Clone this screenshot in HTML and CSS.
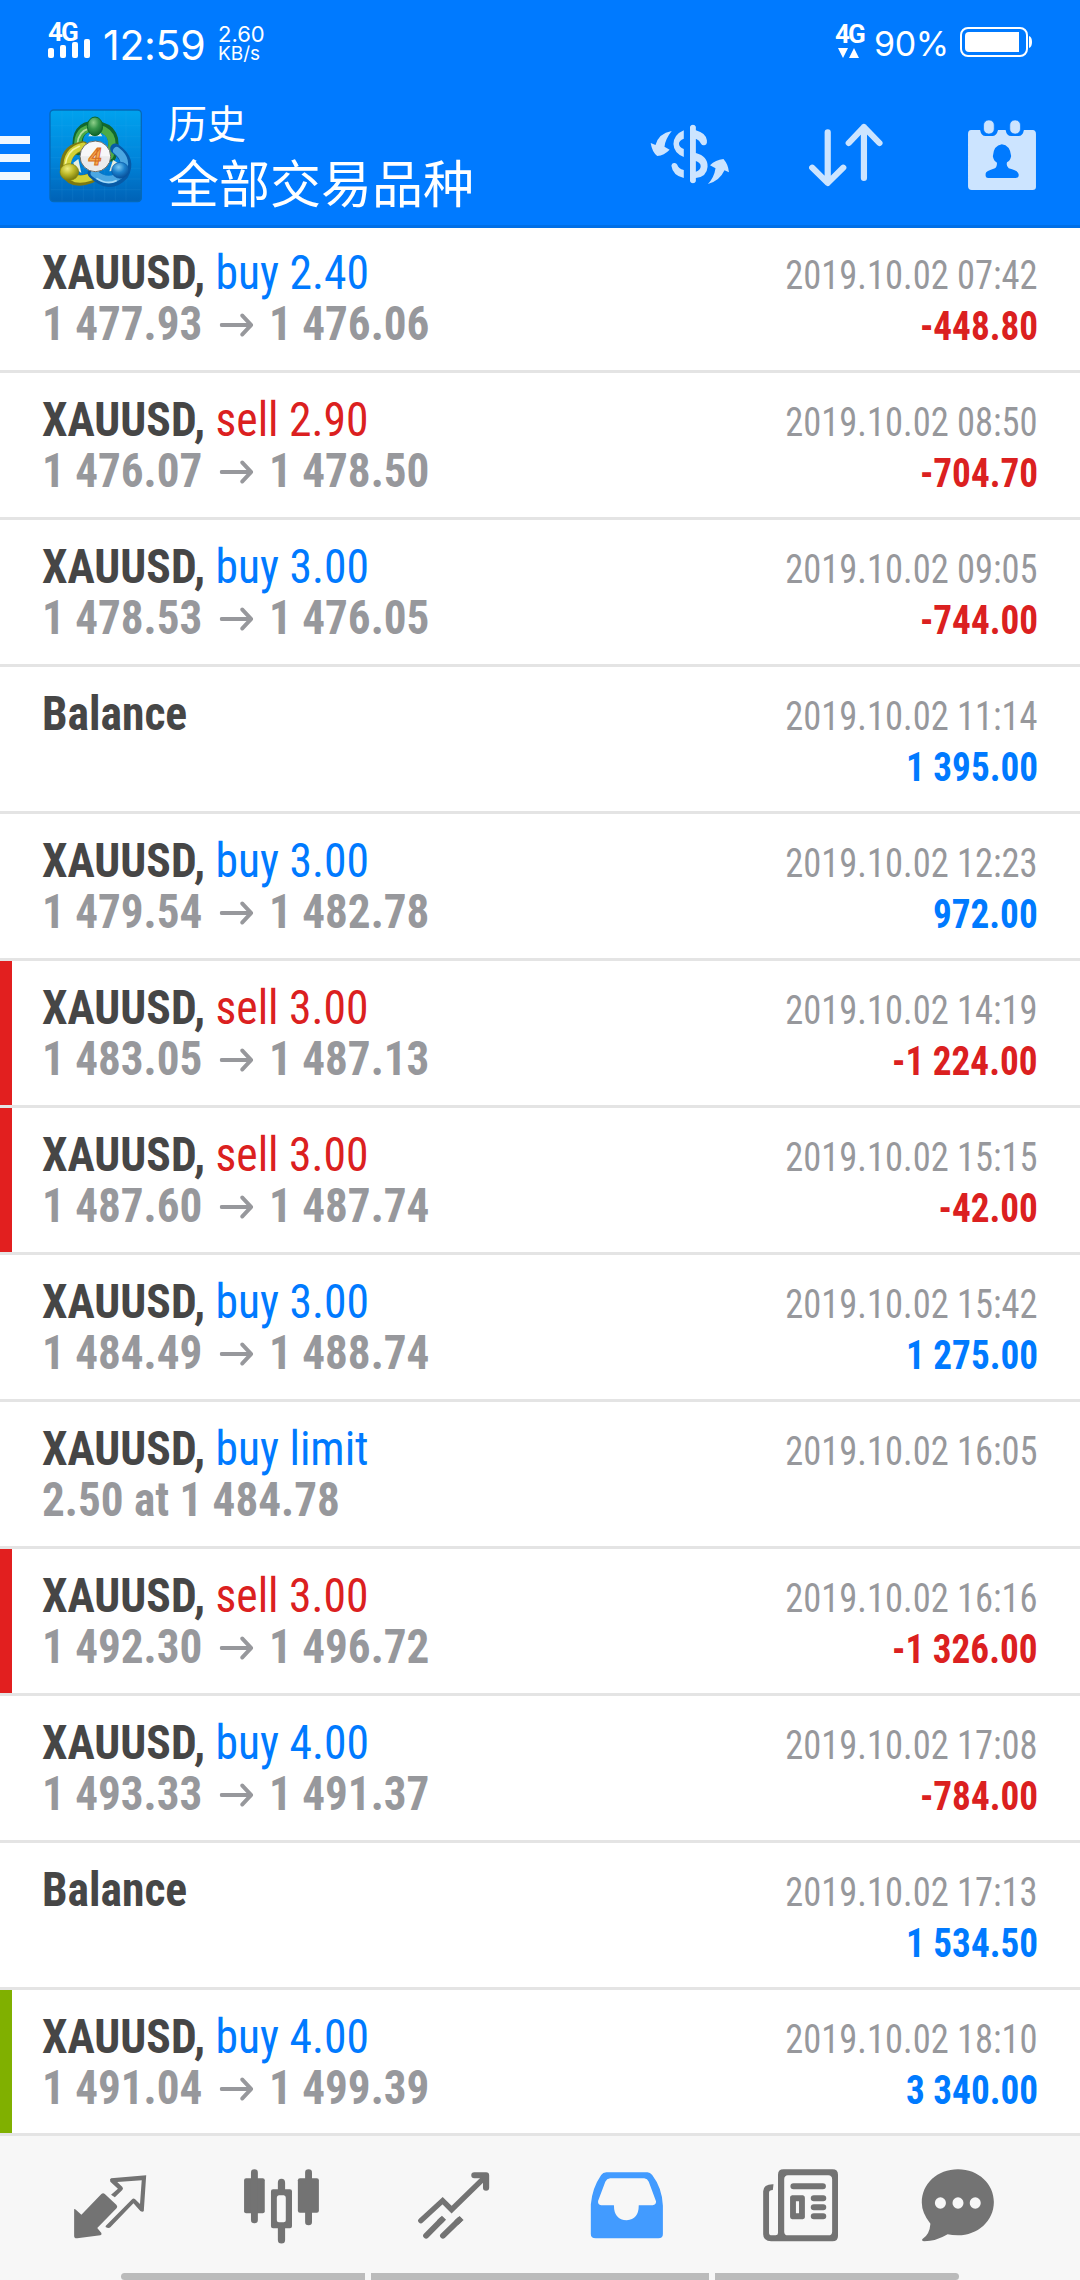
FILE: index.html
```html
<!DOCTYPE html>
<html lang="zh-CN">
<head>
<meta charset="utf-8">
<title>历史</title>
<link rel="stylesheet" href="styles.css">
</head>
<body>
<svg class="defs" width="0" height="0" aria-hidden="true">
  <symbol id="arrow" viewBox="0 0 36 24">
    <path d="M2 12H33M24 2.500L33.500 12L24 21.500" fill="none" stroke="currentColor" stroke-width="4" stroke-linecap="round" stroke-linejoin="round"/>
  </symbol>
</svg>
<div class="screen">
  <header class="header">
    <div class="status">
      <div class="signal">
        <span class="net">4G</span>
        <span class="bars"><i class="b1"></i><i class="b2"></i><i class="b3"></i><i class="b4"></i></span>
      </div>
      <span class="clock">12:59</span>
      <div class="speed"><span>2.60</span><span class="unit">KB/s</span></div>
      <div class="data">
        <span class="net-small">4G</span>
        <svg width="22" height="10" viewBox="0 0 22 10"><path d="M0 0H10L5 10ZM11 10H21L16 0Z" fill="#fff"/></svg>
      </div>
      <span class="percent">90%</span>
      <svg class="battery" width="73" height="30" viewBox="0 0 73 30">
        <rect x="1" y="1" width="66" height="28" rx="7" fill="none" stroke="#fff" stroke-width="2"/>
        <path d="M9 5H59V25H9Q5 25 5 21V9Q5 5 9 5Z" fill="#fff"/>
        <path d="M69 9Q72 10 72 15T69 21Z" fill="#fff"/>
      </svg>
    </div>
    <div class="toolbar">
      <div class="menu"><i></i><i></i><i></i></div>
      <svg class="logo" width="94" height="94" viewBox="0 0 282 282">
        <defs>
          <linearGradient id="bg" x1="0" y1="0" x2="0" y2="1"><stop offset="0" stop-color="#00a2ee"/><stop offset=".55" stop-color="#0084da"/><stop offset="1" stop-color="#0062b6"/></linearGradient>
          <radialGradient id="gr" cx=".4" cy=".3" r=".7"><stop offset="0" stop-color="#8fd08a"/><stop offset=".5" stop-color="#35954a"/><stop offset="1" stop-color="#11632a"/></radialGradient>
          <radialGradient id="ye" cx=".4" cy=".3" r=".7"><stop offset="0" stop-color="#f0ee80"/><stop offset=".5" stop-color="#bdb92a"/><stop offset="1" stop-color="#77780d"/></radialGradient>
          <radialGradient id="bl" cx=".4" cy=".3" r=".7"><stop offset="0" stop-color="#80ccf4"/><stop offset=".5" stop-color="#1c81cc"/><stop offset="1" stop-color="#08509a"/></radialGradient>
        </defs>
        <rect x="3" y="3" width="274" height="275" rx="11" fill="url(#bg)" stroke="#0569b8" stroke-width="4"/>
        <path d="M39 5V275M71 5V275M103 5V275M135 5V275M167 5V275M199 5V275M231 5V275M5 50H275M5 82H275M5 114H275M5 146H275M5 178H275M5 210H275M5 242H275" stroke="#4bb8ef" stroke-opacity=".16" stroke-width="2"/>
        <g stroke-linecap="round" fill="none">
          <path d="M87 123Q78 51 138 51Q213 60 186 142" stroke="#12672f" stroke-width="31"/>
          <path d="M87 119Q81 56 138 56Q206 65 183 139" stroke="#4cab48" stroke-width="22"/>
          <path d="M85 105Q88 67 121 58" stroke="#b2dda0" stroke-width="5"/>
          <path d="M102 112Q43 122 49 188Q70 229 126 207" stroke="#7d7910" stroke-width="31"/>
          <path d="M102 112Q50 124 54 185Q72 222 123 205" stroke="#d3d136" stroke-width="22"/>
          <path d="M91 112Q54 126 49 167" stroke="#f5f29a" stroke-width="5"/>
          <path d="M199 119Q247 153 223 197Q182 242 131 192" stroke="#075aa6" stroke-width="31"/>
          <path d="M203 125Q240 154 218 194Q181 230 136 193" stroke="#4ba7e2" stroke-width="22"/>
          <path d="M144 209Q174 228 201 215" stroke="#a6daf7" stroke-width="5"/>
        </g>
        <path d="M118 82H160L149 64H129ZM88 150L97 192L77 177L73 161ZM192 153L181 187L197 185L211 164Z" fill="#e5eedf"/>
        <ellipse cx="138" cy="52" rx="23" ry="28" fill="url(#gr)" stroke="#0c682c" stroke-width="3"/>
        <ellipse cx="61" cy="189" rx="28" ry="25" fill="url(#ye)" stroke="#85830e" stroke-width="2"/>
        <ellipse cx="214" cy="184" rx="26" ry="24" fill="url(#bl)" stroke="#0758a6" stroke-width="2"/>
        <circle cx="139" cy="142" r="46" fill="#f7f7f9" stroke="#696a64" stroke-width="3"/>
        <path d="M96 142A43 43 0 0 0 182 142Z" fill="#dededf" opacity=".5"/>
        <text class="logo-mark" x="138" y="167" text-anchor="middle">4</text>
      </svg>
      <div class="titles"><span class="title">历史</span><span class="subtitle">全部交易品种</span></div>
      <svg class="act act-currency" width="80" height="66" viewBox="320 363 232 198" preserveAspectRatio="none">
        <g fill="#cce4ff">
          <path d="M383 393Q364 418 362 440L377 449Q361 466 341 468Q326 456 322 429L336 435Q345 400 383 393Z"/>
          <path d="M488 552Q506 533 510 505L494 496Q510 479 533 477Q547 493 549 517L536 511Q522 543 488 552Z"/>
          <path d="M418 391V416Q404 422 404 431Q404 441 418 447V471Q389 459 388 432Q389 404 418 391Z"/>
          <path d="M382 497A9 9 0 0 1 399 494Q402 505 418 510V534Q386 526 382 497Z"/>
          <path fill-rule="evenodd" d="M436 380A9 9 0 0 1 453 380V391Q482 399 485 421V428A9 9 0 0 1 468 431Q464 420 453 416V459Q488 469 487 500Q485 530 453 534V544A9 9 0 0 1 436 544ZM453 483V515Q467 511 467 499Q467 488 453 483Z"/>
        </g>
      </svg>
      <svg class="act act-sort" width="80" height="66" viewBox="773 367 232 198" preserveAspectRatio="none">
        <path d="M836 398V549M791 504L836 550L881 504M941 535V382M897 430L941 382L986 430" fill="none" stroke="#cce4ff" stroke-width="18" stroke-linecap="round" stroke-linejoin="round"/>
      </svg>
      <svg class="act act-calendar" width="70" height="74" viewBox="1240 354 203 222" preserveAspectRatio="none">
        <path fill="#cce4ff" fill-rule="evenodd" d="M1252 390H1278Q1281 408 1294 408H1313Q1326 408 1330 390H1352Q1355 408 1368 408H1389Q1402 408 1405 390H1431Q1440 391 1440 402V561Q1440 570 1430 570H1254Q1243 570 1243 559V401Q1243 391 1252 390ZM1341 433Q1317 436 1315 469Q1317 483 1327 488Q1327 501 1321 505Q1294 514 1294 521V528Q1295 534 1301 534H1382Q1390 533 1390 525Q1391 512 1361 505Q1353 498 1356 487Q1366 482 1368 468Q1365 436 1341 433Z"/>
        <rect x="1288" y="360" width="31" height="42" rx="15" fill="#cce4ff" stroke="#007aff" stroke-width="2"/><rect x="1364" y="360" width="31" height="42" rx="15" fill="#cce4ff" stroke="#007aff" stroke-width="2"/>
      </svg>
    </div>
  </header>

  <main class="list">
    <article class="row"><div class="line"><span class="sym"><b>XAUUSD,</b> <span class="buy">buy 2.40</span></span><time>2019.10.02 07:42</time></div><div class="line"><span class="price">1 477.93<svg class="arrow"><use href="#arrow"/></svg>1 476.06</span><span class="sum loss">-448.80</span></div></article>
    <article class="row"><div class="line"><span class="sym"><b>XAUUSD,</b> <span class="sell">sell 2.90</span></span><time>2019.10.02 08:50</time></div><div class="line"><span class="price">1 476.07<svg class="arrow"><use href="#arrow"/></svg>1 478.50</span><span class="sum loss">-704.70</span></div></article>
    <article class="row"><div class="line"><span class="sym"><b>XAUUSD,</b> <span class="buy">buy 3.00</span></span><time>2019.10.02 09:05</time></div><div class="line"><span class="price">1 478.53<svg class="arrow"><use href="#arrow"/></svg>1 476.05</span><span class="sum loss">-744.00</span></div></article>
    <article class="row"><div class="line"><span class="sym"><b>Balance</b></span><time>2019.10.02 11:14</time></div><div class="line"><span class="sum gain">1 395.00</span></div></article>
    <article class="row"><div class="line"><span class="sym"><b>XAUUSD,</b> <span class="buy">buy 3.00</span></span><time>2019.10.02 12:23</time></div><div class="line"><span class="price">1 479.54<svg class="arrow"><use href="#arrow"/></svg>1 482.78</span><span class="sum gain">972.00</span></div></article>
    <article class="row stop"><div class="line"><span class="sym"><b>XAUUSD,</b> <span class="sell">sell 3.00</span></span><time>2019.10.02 14:19</time></div><div class="line"><span class="price">1 483.05<svg class="arrow"><use href="#arrow"/></svg>1 487.13</span><span class="sum loss">-1 224.00</span></div></article>
    <article class="row stop"><div class="line"><span class="sym"><b>XAUUSD,</b> <span class="sell">sell 3.00</span></span><time>2019.10.02 15:15</time></div><div class="line"><span class="price">1 487.60<svg class="arrow"><use href="#arrow"/></svg>1 487.74</span><span class="sum loss">-42.00</span></div></article>
    <article class="row"><div class="line"><span class="sym"><b>XAUUSD,</b> <span class="buy">buy 3.00</span></span><time>2019.10.02 15:42</time></div><div class="line"><span class="price">1 484.49<svg class="arrow"><use href="#arrow"/></svg>1 488.74</span><span class="sum gain">1 275.00</span></div></article>
    <article class="row"><div class="line"><span class="sym"><b>XAUUSD,</b> <span class="buy">buy limit</span></span><time>2019.10.02 16:05</time></div><div class="line"><span class="price">2.50 at 1 484.78</span></div></article>
    <article class="row stop"><div class="line"><span class="sym"><b>XAUUSD,</b> <span class="sell">sell 3.00</span></span><time>2019.10.02 16:16</time></div><div class="line"><span class="price">1 492.30<svg class="arrow"><use href="#arrow"/></svg>1 496.72</span><span class="sum loss">-1 326.00</span></div></article>
    <article class="row"><div class="line"><span class="sym"><b>XAUUSD,</b> <span class="buy">buy 4.00</span></span><time>2019.10.02 17:08</time></div><div class="line"><span class="price">1 493.33<svg class="arrow"><use href="#arrow"/></svg>1 491.37</span><span class="sum loss">-784.00</span></div></article>
    <article class="row"><div class="line"><span class="sym"><b>Balance</b></span><time>2019.10.02 17:13</time></div><div class="line"><span class="sum gain">1 534.50</span></div></article>
    <article class="row take"><div class="line"><span class="sym"><b>XAUUSD,</b> <span class="buy">buy 4.00</span></span><time>2019.10.02 18:10</time></div><div class="line"><span class="price">1 491.04<svg class="arrow"><use href="#arrow"/></svg>1 499.39</span><span class="sum gain">3 340.00</span></div></article>
  </main>

  <footer class="footer">
    <nav class="tabs">
      <svg viewBox="203 140 232 240" preserveAspectRatio="none">
        <path fill="#737373" d="M215 267Q216 264 220 268L236 283L294 221Q299 217 304 221L338 254Q342 259 338 264L282 323L294 338Q296 343 291 345L224 354Q215 355 215 346Z"/>
        <path fill="#737373" fill-rule="evenodd" d="M424 165L417 272Q414 277 407 272L387 249L320 321Q315 325 306 320L307 316L383 237Q387 232 392 237L406 251L411 180L340 185L355 200Q359 205 354 210L333 231L322 223L342 205L320 184Q317 177 322 174Z"/>
      </svg>
      <svg viewBox="703 140 232 240" preserveAspectRatio="none" fill="#737373">
        <rect x="709" y="174" width="60" height="105" rx="6"/><rect x="729" y="147" width="20" height="162" rx="10"/>
        <rect x="865" y="174" width="61" height="103" rx="6"/><rect x="886" y="147" width="20" height="168" rx="10"/>
        <path fill-rule="evenodd" d="M807 187A10 11 0 0 1 828 187V207H842Q848 207 848 213V318Q848 324 842 324H828V359A10 10 0 0 1 807 359V324H793Q787 324 787 318V213Q787 207 793 207H807ZM810 225Q804 226 804 232V300Q804 306 810 306H824Q830 306 830 300V232Q830 226 824 225Z"/>
      </svg>
      <svg viewBox="1202 140 232 240" preserveAspectRatio="none" fill="none" stroke="#737373" stroke-width="17" stroke-linecap="round">
        <path d="M1222 301L1285 241L1311 268L1407 171" stroke-width="16"/><path d="M1377 165H1411V202" stroke-width="18" stroke-linejoin="round"/>
        <path d="M1237 346L1282 299M1286 346L1333 299"/><path d="M1275 306L1289 292M1325 307L1340 293" stroke-linecap="butt"/>
      </svg>
      <svg viewBox="134 140 232 240" preserveAspectRatio="none">
        <path fill="#429bff" fill-rule="evenodd" d="M193 156H312Q320 156 326 164Q355 203 357 256V341Q357 354 344 354H162Q148 354 148 341V252Q152 203 178 164Q183 156 193 156ZM204 174Q194 175 190 184L169 242Q168 253 178 255H215Q215 299 252 300Q287 298 287 255H327Q338 253 337 243L316 184Q312 175 303 174Z"/>
      </svg>
      <svg viewBox="633 140 232 240" preserveAspectRatio="none">
        <path fill="#737373" fill-rule="evenodd" d="M707 147H849Q865 147 865 163V347Q865 363 849 363H671Q648 362 648 342V213Q649 191 678 192L676 209Q665 209 665 217V337Q665 345 673 345H684Q691 345 691 338V163Q691 147 707 147ZM720 165Q709 166 709 177V334Q709 345 720 345H837Q848 345 848 334V177Q848 166 837 165ZM732 225H763Q769 226 769 232V291Q769 296 763 297H732Q726 296 726 290V231Q726 226 732 225ZM743 243V279H752V243Z"/>
        <path d="M736 198H821M795 234H822M795 261H822M795 288H822" stroke="#737373" stroke-width="18" stroke-linecap="round"/>
      </svg>
      <svg class="chat" viewBox="1098 140 232 240" preserveAspectRatio="none">
        <path fill="#737373" d="M1214 147C1274 147 1318 192 1318 245C1318 303 1270 345 1214 345Q1196 345 1184 342Q1150 363 1116 363Q1107 361 1111 356Q1132 342 1134 310Q1109 277 1109 247C1109 190 1154 147 1214 147Z"/>
        <g fill="#f7f7f7"><ellipse cx="1163" cy="248" rx="16" ry="17"/><ellipse cx="1214" cy="248" rx="16" ry="17"/><ellipse cx="1264" cy="248" rx="16" ry="17"/></g>
      </svg>
    </nav>
    <div class="handles"><i></i><i></i><i></i></div>
  </footer>
</div>
</body>
</html>
```
FILE: styles.css
```css
* { box-sizing: border-box; }
body { margin: 0; background: #fff; font-family: "Roboto Condensed", Roboto, "Noto Sans CJK SC", sans-serif; font-stretch: 75%; }
svg { display: block; flex: none; }
i { display: block; }
.defs { position: absolute; }
.screen { width: 1080px; height: 2280px; display: flex; flex-direction: column; overflow: hidden; }

.header { height: 228px; flex: none; background: #007aff; border-bottom: 3px solid #006fe6; color: #fff; }
.status { height: 88px; display: flex; align-items: flex-start; padding-left: 48px; font-family: Inter, Roboto, sans-serif; font-stretch: 100%; }
.signal { width: 43px; padding-top: 22px; }
.net { display: block; height: 17px; font: 700 26px/20px Roboto, sans-serif; letter-spacing: -2px; }
.bars { display: flex; align-items: flex-end; gap: 6px; height: 19px; }
.bars i { width: 6px; background: #fff; border-radius: 2px; }
.b1 { height: 10px; }
.b2 { height: 13px; }
.b3 { height: 16px; }
.b4 { height: 19px; }
.clock { width: 115px; margin-left: 12px; padding-top: 20px; font-size: 41px; line-height: 50px; letter-spacing: -0.3px; }
.speed { width: 80px; padding-top: 24px; display: flex; flex-direction: column; font-size: 22px; line-height: 20px; }
.unit { font-size: 19px; }
.data { width: 30px; margin-left: 537px; padding-top: 24px; }
.data svg { margin: 4px 0 0 3px; }
.net-small { display: block; height: 20px; font: 700 26px/20px Roboto, sans-serif; letter-spacing: -2px; }
.percent { width: 86px; margin-left: 9px; padding-top: 23px; font-size: 34px; line-height: 41px; letter-spacing: -0.4px; }
.battery { margin: 27px 0 0 0; }

.toolbar { display: flex; align-items: flex-start; }
.menu { width: 30px; padding-top: 48px; display: flex; flex-direction: column; gap: 10px; }
.menu i { height: 8px; background: #f0f8ff; }
.logo { margin: 21px 0 0 19px; }
.logo-mark { font: italic 700 70px Roboto, sans-serif; fill: #f7a94d; stroke: #d66c1e; stroke-width: 3px; }
.titles { width: 341px; margin-left: 25px; padding-top: 9px; display: flex; flex-direction: column; font-family: "Noto Sans CJK SC", sans-serif; white-space: nowrap; }
.title { font-size: 39px; line-height: 48px; }
.subtitle { font-size: 51px; line-height: 72px; }
.act-currency { margin: 33px 0 0 141px; }
.act-sort { margin: 34px 0 0 76px; }
.act-calendar { margin: 30px 0 0 81px; }

.list { flex: none; margin-top: -2px; }
.row { height: 147px; padding: 21px 42px 0; border-bottom: 3px solid #e4e4e4; }
.row:last-child { height: 146px; }
.stop { background: linear-gradient(#e21f1f, #e21f1f) left / 12px 100% no-repeat; }
.take { background: linear-gradient(#80b000, #80b000) left / 12px 100% no-repeat; }
.line { height: 51px; display: flex; align-items: baseline; font-size: 48px; line-height: 51px; white-space: nowrap; }
/* keeps the baseline of the 48px text on lines that only hold an amount */
.line::before { content: "\200b"; width: 0; }
.sym { transform: scaleX(0.949); transform-origin: left; }
.sym b { color: #464646; font-weight: 700; }
.buy { color: #007aff; }
.sell { color: #db2020; }
.line time { margin-left: auto; font-size: 40px; color: #97989c; transform: scaleX(0.912); transform-origin: right; }
.price { color: #97989c; font-weight: 700; transform: scaleX(0.94); transform-origin: left; }
.arrow { display: inline-block; width: 36px; height: 24px; margin: 0 17px 0 18px; vertical-align: 3px; }
.sum { margin-left: auto; font-size: 40px; font-weight: 700; transform: scaleX(0.93); transform-origin: right; }
.loss { color: #db2020; }
.gain { color: #007aff; }

.footer { flex: 1; background: #f7f7f7; display: flex; flex-direction: column; justify-content: space-between; }
.tabs { display: grid; grid-template-columns: repeat(5, 172px) 148px; justify-items: center; padding: 31px 24px 0; }
.tabs svg { width: 80px; height: 80px; }
.handles { display: flex; gap: 6px; padding-left: 121px; }
.handles i { width: 244px; height: 7px; background: #bbb; }
.handles i:nth-child(2) { width: 338px; }
.handles i:first-child { border-radius: 4px 0 0 4px; }
.handles i:last-child { border-radius: 0 4px 4px 0; }
```
